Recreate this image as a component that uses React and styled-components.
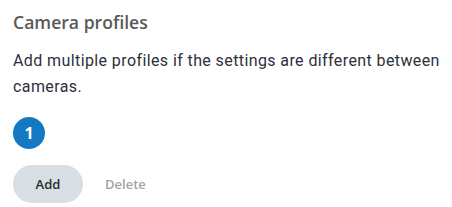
import React from "react";
import styled, { createGlobalStyle } from "styled-components";

const GlobalStyle = createGlobalStyle`
  html, body {
    margin: 0;
    padding: 0;
    background: #ffffff;
  }
`;

const Panel = styled.section`
  padding: 10px 4px 0 13px;
  width: 452px;
  box-sizing: border-box;
  font-family: Roboto, "Liberation Sans", sans-serif;
`;

const Title = styled.h2`
  margin: 0;
  font-family: "Open Sans", "Liberation Sans", sans-serif;
  font-size: 17.6px;
  line-height: 24px;
  font-weight: 600;
  color: #595959;
`;

const Description = styled.p`
  margin: 14px 0 0 0;
  font-size: 16px;
  line-height: 26px;
  letter-spacing: 0.4px;
  color: #2e2f3d;
`;

const Steps = styled.div`
  display: flex;
  gap: 8px;
  margin-top: 17px;
`;

const StepBadge = styled.div`
  width: 32px;
  height: 32px;
  border-radius: 50%;
  background: ${(p) => (p.$active ? "#1479c2" : "#d8dfe2")};
  color: #ffffff;
  display: flex;
  align-items: center;
  justify-content: center;
  font-family: "Open Sans", "Liberation Sans", sans-serif;
  font-weight: 700;
  font-size: 16px;
`;

const Actions = styled.div`
  display: flex;
  align-items: center;
  margin-top: 16px;
`;

const ActionButton = styled.button`
  height: 38px;
  width: ${(p) => (p.$primary ? "70px" : "auto")};
  padding: ${(p) => (p.$primary ? "0" : "0 22px")};
  border: none;
  border-radius: 19px;
  background: ${(p) => (p.$primary ? "#d8dfe2" : "transparent")};
  color: ${(p) => (p.$primary ? "#2b2b33" : "#a3a3a3")};
  font-family: "Open Sans", "Liberation Sans", sans-serif;
  font-size: 13px;
  font-weight: 600;
  cursor: pointer;
`;

export default function App() {
  return (
    <>
      <GlobalStyle />
      <Panel>
        <Title>Camera profiles</Title>
        <Description>
          Add multiple profiles if the settings are different between cameras.
        </Description>
        <Steps>
          <StepBadge $active>1</StepBadge>
        </Steps>
        <Actions>
          <ActionButton $primary>Add</ActionButton>
          <ActionButton>Delete</ActionButton>
        </Actions>
      </Panel>
    </>
  );
}
